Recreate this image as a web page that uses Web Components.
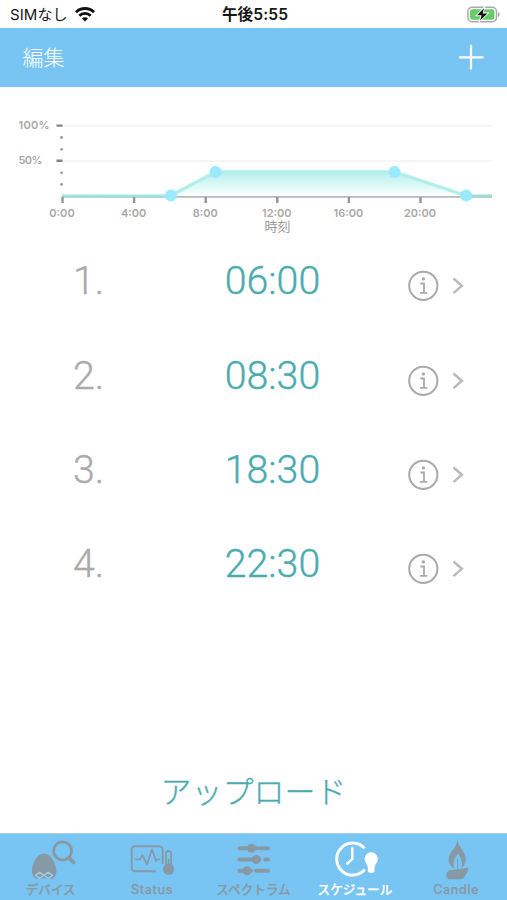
<!DOCTYPE html>
<html lang="ja">
<head>
<meta charset="utf-8">
<meta name="viewport" content="width=device-width, initial-scale=1">
<title>スケジュール</title>
<style>
body {
  margin: 0;
  background: #fff;
  font-family: Inter, "Noto Sans CJK JP", sans-serif;
}
</style>
</head>
<body>
<schedule-app>
  <status-bar slot="top" carrier="SIMなし" time="午後5:55"></status-bar>
  <nav-bar slot="top">編集</nav-bar>
  <light-chart slot="top"></light-chart>
  <schedule-row number="1">06:00</schedule-row>
  <schedule-row number="2">08:30</schedule-row>
  <schedule-row number="3">18:30</schedule-row>
  <schedule-row number="4">22:30</schedule-row>
  <upload-button slot="bottom">アップロード</upload-button>
  <tab-bar slot="bottom">
    <tab-item icon="device">デバイス</tab-item>
    <tab-item icon="status" style="letter-spacing: 0.65px">Status</tab-item>
    <tab-item icon="spectrum">スペクトラム</tab-item>
    <tab-item icon="schedule" active>スケジュール</tab-item>
    <tab-item icon="candle" style="letter-spacing: 0.65px">Candle</tab-item>
  </tab-bar>
</schedule-app>

<script>
function createTemplate(html) {
  const template = document.createElement("template");
  template.innerHTML = html;
  return template;
}

class BaseElement extends HTMLElement {
  constructor() {
    super();
    this.attachShadow({ mode: "open" });
    this.shadowRoot.appendChild(
      this.constructor.template.content.cloneNode(true)
    );
  }

  find(selector) {
    return this.shadowRoot.querySelector(selector);
  }
}

class ScheduleApp extends BaseElement {}

ScheduleApp.template = createTemplate(`<style>
:host {
  display: flex;
  flex-direction: column;
  height: 900px;
  width: 507px;
  overflow: hidden;
}

main {
  flex: 1;
}
</style>
<slot name="top"></slot>
<main><slot></slot></main>
<slot name="bottom"></slot>`);

class StatusBar extends BaseElement {
  connectedCallback() {
    this.find(".carrier").textContent = this.getAttribute("carrier");
    this.find(".time").textContent = this.getAttribute("time");
  }
}

StatusBar.template = createTemplate(`<style>
:host {
  display: grid;
  grid-template-columns: 1fr auto 1fr;
  align-items: center;
  height: 28px;
  box-sizing: border-box;
  padding: 1px 7px 0 10px;
  color: #151515;
  font-size: 15px;
  line-height: 20px;
}

.left {
  display: flex;
  align-items: center;
  gap: 7px;
}

.carrier {
  letter-spacing: 0.1px;
}

.time {
  font-size: 15.6px;
  font-weight: 600;
  letter-spacing: 0.1px;
}

.battery {
  justify-self: end;
}

svg {
  display: block;
}
</style>
<div class="left">
  <span class="carrier"></span>
  <svg width="20" height="15" viewBox="0 0 20 15" fill="none" stroke="#111" stroke-width="2.8">
    <path d="M1 5.2a12.8 12.8 0 0 1 18 0M4.3 8.8a8 8 0 0 1 11.4 0"/>
    <path d="M10 14.5 6.9 11.5a4.4 4.4 0 0 1 6.2 0z" fill="#111" stroke="none"/>
  </svg>
</div>
<span class="time"></span>
<svg class="battery" width="33" height="17" viewBox="0 0 33 17">
  <rect x="0.9" y="1.2" width="28.6" height="14.6" rx="4.3" fill="#fff" stroke="#aaa" stroke-width="1.5"/>
  <rect x="3" y="3.3" width="24.4" height="10.4" rx="2.4" fill="#65cc68"/>
  <path d="M31 6v5q1.7-.7 1.7-2.5T31 6z" fill="#aaa"/>
  <path d="m16.9 2.2-6.9 7.1h4.6l-1.6 5.2 7.4-7.1h-4.7z" fill="#111" stroke="#fff" stroke-width="1.8" paint-order="stroke"/>
</svg>`);

class NavBar extends BaseElement {}

NavBar.template = createTemplate(`<style>
:host {
  display: flex;
  align-items: center;
  justify-content: space-between;
  height: 59px;
  box-sizing: border-box;
  padding: 0 23px 3px 22.5px;
  background: #78c5f4;
  color: #fff;
  font: 300 21px/30px "Noto Sans CJK JP", sans-serif;
}

svg {
  display: block;
  margin-top: 2px;
}
</style>
<span><slot></slot></span>
<svg width="26" height="26" viewBox="0 0 26 26" stroke="#fff" stroke-width="2.3" stroke-linecap="round">
  <path d="M13 2v22.5M2 13.4H24.5"/>
</svg>`);

const HOUR_WIDTH = 17.9;
const CHART_LEFT = 62.5;
const CHART_RIGHT = 492;
const CHART_BASE = 109;

class LightChart extends BaseElement {
  connectedCallback() {
    const x = (hour) => CHART_LEFT + hour * HOUR_WIDTH;
    const points = [[6.06, 108.6], [8.55, 85], [18.55, 85], [22.55, 108.6]];

    let ticks = "";
    for (let hour = 0; hour <= 20; hour += 4) {
      ticks += `<path class="tick" d="M${x(hour)} 110v6"/>
        <text x="${x(hour) - 0.5}" y="129.6" text-anchor="middle">${hour}:00</text>`;
    }

    const marks = [50.5, 62.3, 85.8, 97.4]
      .map((y) => `<circle cx="61.6" cy="${y}" r="1.4" fill="#999"/>`)
      .join("");
    const peaks = points.map(([hour, y]) => `${x(hour)} ${y}`).join("L");
    const dots = points
      .map(([hour, y]) => `<circle cx="${x(hour)}" cy="${y}" r="6" fill="#98eafc"/>`)
      .join("");

    this.find("svg").innerHTML = `
      <defs>
        <linearGradient id="area" x1="0" y1="0" x2="0" y2="1">
          <stop offset="0" stop-color="#b4f1ee"/>
          <stop offset="1" stop-color="#fafffe"/>
        </linearGradient>
      </defs>
      <path d="M62 38.7H492M62 74H492" stroke="#f3f3f4" stroke-width="1.5"/>
      <path d="M56.5 38.6h6M56.5 73.8h6" stroke="#858585" stroke-width="2.4"/>
      ${marks}
      <text x="18.5" y="42" textLength="31">100%</text>
      <text x="18.5" y="77.2" textLength="24">50%</text>
      <path d="M${peaks}z" fill="url(#area)"/>
      <path d="M62 109.8H492" stroke="#b9b9b9" stroke-width="1.8"/>
      <path d="M62 ${CHART_BASE}L${peaks}" fill="none" stroke="#b2efeb" stroke-width="3.4"/>
      <path d="M${x(22.55)} ${CHART_BASE}H${CHART_RIGHT}" stroke="#9fdadb" stroke-width="3"/>
      <path d="M62 109.5H165" stroke="#9ddcd9" stroke-width="2"/>
      ${ticks}
      ${dots}
      <text class="axis" x="277.5" y="144.3" text-anchor="middle">時刻</text>`;
  }
}

LightChart.template = createTemplate(`<style>
:host {
  display: block;
  height: 152px;
}

svg {
  display: block;
}

text {
  fill: #a8a8a8;
  font-size: 11px;
  font-weight: 600;
}

.tick {
  stroke: #949494;
  stroke-width: 2.4;
}

.axis {
  font: 400 13px "Liberation Sans", "Noto Sans CJK JP", sans-serif;
  fill: #999;
}
</style>
<svg width="507" height="152" viewBox="0 0 507 152"></svg>`);

class ScheduleRow extends BaseElement {
  connectedCallback() {
    this.find(".number").textContent = `${this.getAttribute("number")}.`;
  }
}

ScheduleRow.template = createTemplate(`<style>
:host {
  display: grid;
  grid-template-columns: 177px 191px 1fr;
  align-items: center;
  height: 94.4px;
  box-sizing: border-box;
  font: 300 39.3px/46px Roboto, sans-serif;
  -webkit-text-stroke: 0.35px currentColor;
}

span {
  padding-bottom: 10px;
}

.number {
  padding-left: 73px;
  color: #aaa;
}

.time {
  color: #4aabb0;
  text-align: center;
}

.actions {
  display: flex;
  align-items: center;
  gap: 12px;
  padding-left: 39px;
}

svg {
  display: block;
  fill: none;
  stroke: #aaa;
}
</style>
<span class="number"></span>
<span class="time"><slot></slot></span>
<div class="actions">
  <svg width="32" height="32" viewBox="0 0 32 32">
    <circle cx="16.3" cy="15.8" r="14.1" stroke-width="2"/>
    <path d="M13.4 13.5h3.6v9M12.9 22.9h7.4" stroke-width="1.8"/>
    <circle cx="16.4" cy="8.9" r="1.7" fill="#aaa" stroke="none"/>
  </svg>
  <svg width="14" height="20" viewBox="0 0 14 20">
    <path d="m2.5 2.5 8.4 7.3-8.4 7.3" stroke="#bbb" stroke-width="2.5"/>
  </svg>
</div>`);

class UploadButton extends BaseElement {}

UploadButton.template = createTemplate(`<style>
:host {
  display: block;
  height: 66px;
}

button {
  display: block;
  margin: 0 auto;
  padding: 0;
  border: 0;
  background: none;
  color: #4aabb0;
  font: 300 31px/46px "Noto Sans CJK JP", sans-serif;
  -webkit-text-stroke: 0.3px currentColor;
}
</style>
<button><slot></slot></button>`);

class TabBar extends BaseElement {}

TabBar.template = createTemplate(`<style>
:host {
  display: grid;
  grid-template-columns: repeat(5, 1fr);
  height: 67px;
  box-sizing: border-box;
  border-top: 1px solid #a4cfe1;
  background: #78c5f4;
}
</style>
<slot></slot>`);

// 50x43 glyphs, painted with currentColor
const tabIcons = {
  device: `
    <path d="M6 30C7.5 21 12 14.8 17.9 14.8S28.5 21 30.2 30q1.2 6.5-3.5 9.6H10.3Q4.8 36.8 6 30z" fill="currentColor" stroke="none"/>
    <path d="m9.5 36.3 4.2-3 4.2 3 4.2-3 4.5 3-4.3 2.9-4.4-2.9-4.4 2.9z" stroke="#a0d0ea" stroke-width="1.3"/>
    <circle cx="36.6" cy="11.8" r="9" stroke-width="2.8"/>
    <path d="m43 18.8 4.6 4.6" stroke-width="3.8" stroke-linecap="round"/>`,
  status: `
    <path d="M29 32.3H8.2a3.5 3.5 0 0 1-3.5-3.5V10.7a3.5 3.5 0 0 1 3.5-3.5h24a3.5 3.5 0 0 1 3.5 3.5V25" stroke-width="1.9"/>
    <path d="M8 20.3h5l2.5-4 4.5 9 5-15 4 12 1.2-2h3" stroke-width="1.7" stroke-linejoin="round"/>
    <path d="M39.1 27V14.5a2.5 2.5 0 0 1 5 0V27" stroke-width="1.8"/>
    <circle cx="41.6" cy="30.3" r="5.6" fill="currentColor" stroke="none"/>
    <path d="M41.6 20v10" stroke-width="1.6"/>`,
  spectrum: `
    <g stroke-width="3.9" stroke-linecap="round">
      <path d="M11.3 9.3h18M32.5 9.3h7.5M11.3 20.5h20M37.3 20.5h2.7M11.3 31.7h12M28 31.7h12"/>
    </g>
    <g fill="currentColor" stroke="none">
      <circle cx="23.4" cy="9.3" r="4.5"/><circle cx="28.3" cy="20.5" r="4.5"/><circle cx="19" cy="31.7" r="4.5"/>
    </g>`,
  schedule: `
    <path d="M34.5 9.3A16 16 0 1 0 34.8 30.6" stroke-width="3"/>
    <path d="M22.3 9v11l-5 4.7" stroke-width="2.4" stroke-linecap="round"/>
    <path d="M41.2 13.2a6.6 6.6 0 0 0-6.6 6.6c0 4 3 5.3 3.2 9.3v2.4q0 2.3 3.4 2.6 3.4-.3 3.4-2.6v-2.4c.2-4 3.2-5.3 3.2-9.3a6.6 6.6 0 0 0-6.6-6.6z" fill="currentColor" stroke="none"/>`,
  candle: `
    <path d="M26.5.8c.5 8 8.5 11.2 8.2 20.2-.2 4-1.8 6-4.4 8.7 1-6.2.2-10.4-3.4-15.2-3.8 4.8-5.2 9.6-3.7 15.2-4.3-3.2-6-6-5.6-10.2.8-7 7.6-9 8.9-18.7z" fill="currentColor" stroke="none"/>
    <path d="M26.7 20v10" stroke-width="1"/>
    <path d="m18 31.6 18.2-2.9q2 0 1 2.5L33.5 38q-1.5 2.2-5 2.2H18.5q-3.8-.3-3.2-4.5.4-3.3 2.7-4.1z" fill="currentColor" stroke="none"/>`,
};

class TabItem extends BaseElement {
  connectedCallback() {
    this.find("svg").innerHTML = tabIcons[this.getAttribute("icon")];
  }
}

TabItem.template = createTemplate(`<style>
:host {
  display: flex;
  flex-direction: column;
  align-items: center;
  padding-top: 5px;
  color: #8799a5;
  font-size: 12.6px;
  font-weight: 500;
  line-height: 18px;
  white-space: nowrap;
  -webkit-text-stroke: 0.25px currentColor;
}

:host([active]) {
  color: #fff;
}

svg {
  display: block;
  flex: none;
  fill: none;
  stroke: currentColor;
}

span {
  margin-top: -1px;
}
</style>
<svg width="50" height="43" viewBox="0 0 50 43"></svg>
<span><slot></slot></span>`);

window.customElements.define("schedule-app", ScheduleApp);
window.customElements.define("status-bar", StatusBar);
window.customElements.define("nav-bar", NavBar);
window.customElements.define("light-chart", LightChart);
window.customElements.define("schedule-row", ScheduleRow);
window.customElements.define("upload-button", UploadButton);
window.customElements.define("tab-bar", TabBar);
window.customElements.define("tab-item", TabItem);
</script>
</body>
</html>
